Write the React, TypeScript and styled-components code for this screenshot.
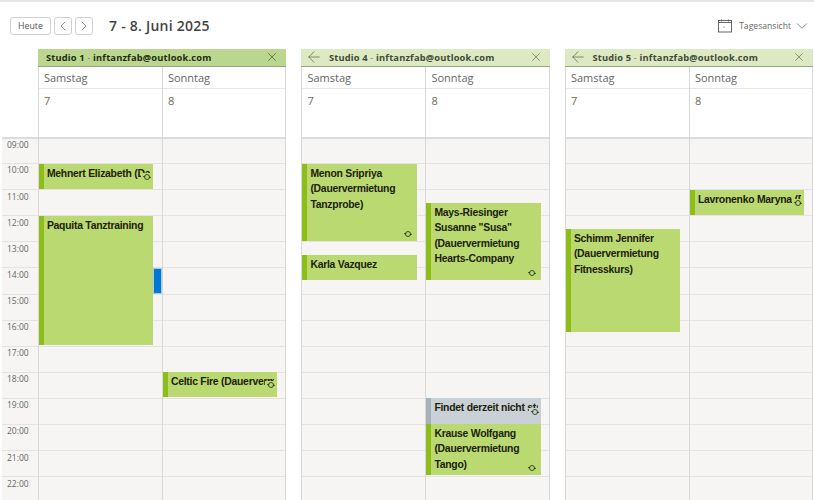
import styled, { createGlobalStyle } from "styled-components";
import { ArrowLeft, ChevronDown, ChevronLeft, ChevronRight, X } from "lucide-react";

const HOUR = 26.1;
const FIRST_HOUR = 9;
const HOURS = Array.from({ length: 14 }, (_, i) => FIRST_HOUR + i);

const GlobalStyle = createGlobalStyle`
  html, body {
    margin: 0;
    padding: 0;
    height: 500px;
    overflow: hidden;
    background: #fff;
    font-family: "Open Sans", "Noto Sans", sans-serif;
  }
  * { box-sizing: border-box; }
`;

const Page = styled.div`
  width: 814px;
  height: 500px;
  overflow: hidden;
  border-top: 2px solid #e6e6e6;
`;

const Toolbar = styled.div`
  display: flex;
  align-items: center;
  height: 46.5px;
  padding: 1px 3.5px 0 10px;
`;

const ToolButton = styled.button<{ $wide?: boolean }>`
  display: flex;
  align-items: center;
  justify-content: center;
  width: ${(p) => (p.$wide ? "41px" : "18px")};
  height: 18px;
  margin-right: 3px;
  padding: 0;
  border: 1px solid #d0d0d0;
  border-radius: 3px;
  background: #fff;
  color: #555;
  font-family: inherit;
  font-size: 8.8px;
`;

const RangeTitle = styled.h1`
  margin: 0 0 0 13px;
  color: #444;
  font-size: 14px;
  font-weight: 600;
  letter-spacing: 0.25px;
`;

const ViewSwitch = styled.div`
  display: flex;
  align-items: center;
  margin-left: auto;
  color: #666;
  font-size: 8.6px;
`;

const ViewLabel = styled.span`
  margin: 0 1.5px 0 7px;
`;

const Board = styled.div`
  display: flex;
  padding-left: 2px;
`;

const TimeColumn = styled.div`
  width: 35.9px;
  flex-shrink: 0;
  padding-top: 88.5px;
`;

const TimeCell = styled.div`
  height: ${HOUR}px;
  padding: 0.4px 0 0 5px;
  background: #f6f5f4;
  border-top: 1px solid #e4e3e2;
  color: #666;
  font-size: 8.5px;
  line-height: 11px;

  &:first-child {
    border-top: 2px solid #dcdcdc;
  }
`;

const Panels = styled.div`
  display: flex;
  gap: 15px;
`;

const Panel = styled.section`
  width: 248.5px;
  flex-shrink: 0;
`;

const PanelHeader = styled.header<{ $active?: boolean }>`
  display: flex;
  align-items: center;
  height: 18px;
  padding: 0 7px 0 ${(p) => (p.$active ? "8px" : "4px")};
  background: ${(p) => (p.$active ? "#bbd78f" : "#dce9c3")};
  border-bottom: 1px solid #98a585;
  color: ${(p) => (p.$active ? "#1f2a12" : "#3f4a38")};
  font-size: 9.3px;
  font-weight: 700;
  letter-spacing: 0.17px;
`;

const PanelName = styled.span<{ $active?: boolean }>`
  margin-left: ${(p) => (p.$active ? "0" : "5.5px")};
  flex: 1;
  white-space: nowrap;
`;

const Dash = styled.span`
  font-weight: 400;
  color: #777;
`;

const Days = styled.div`
  display: grid;
  grid-template-columns: 124px 1fr;
  border-right: 1px solid #d8d8d8;
`;

const Day = styled.div`
  border-left: 1px solid #d8d8d8;
`;

const DayName = styled.div`
  height: 22px;
  padding: 3px 0 0 5px;
  border-bottom: 1px solid #e6e6e6;
  color: #666;
  font-size: 11px;
  line-height: 15px;
`;

const DayNumber = styled.div`
  height: 48.5px;
  padding: 4px 0 0 5px;
  color: #6b6b5c;
  font-size: 11px;
  line-height: 15px;
`;

const Grid = styled.div`
  position: relative;
`;

const HourCell = styled.div`
  height: ${HOUR}px;
  background: #f6f5f4;
  border-top: 1px solid #e4e3e2;

  &:first-child {
    border-top: 2px solid #dcdcdc;
  }
`;

const Event = styled.div<{ $muted?: boolean }>`
  position: absolute;
  left: 0;
  width: 114.5px;
  padding: 1.5px 3px 0 3px;
  background: ${(p) => (p.$muted ? "#c9d1d6" : "#bbd971")};
  border-left: 5px solid ${(p) => (p.$muted ? "#a3b2bd" : "#8cbd18")};
  color: #1c210c;
  font-family: "Liberation Sans", Arial, sans-serif;
  font-size: 10.4px;
  font-weight: 700;
  letter-spacing: -0.25px;
  line-height: 15.5px;
`;

const EventTitle = styled.div<{ $single?: boolean }>`
  overflow: hidden;
  white-space: ${(p) => (p.$single ? "nowrap" : "normal")};
`;

// the icon sits on a patch of the event colour and hides the lower part of the text
const IconPatch = styled.span<{ $single?: boolean }>`
  position: absolute;
  right: ${(p) => (p.$single ? "0" : "2px")};
  bottom: ${(p) => (p.$single ? "7.5px" : "3px")};
  display: flex;
  align-items: center;
  justify-content: center;
  width: ${(p) => (p.$single ? "12px" : "13px")};
  height: 9px;
  background: inherit;
`;

const Marker = styled.div`
  position: absolute;
  left: 114px;
  width: 9px;
  height: 26px;
  background: #0078d4;
  border: 1px solid #a9c9e8;
`;

const SyncIcon = () => (
  <svg width="10" height="8" viewBox="0 0 10 8" fill="none" stroke="#333d1c" strokeWidth="0.9">
    <circle cx="5" cy="4" r="2.5" />
    <path d="M1 3.6h2.2M6.8 4.4H9" />
  </svg>
);

const CalendarIcon = () => (
  <svg width="14" height="14" viewBox="0 0 14 14" fill="none" stroke="#555" strokeWidth="0.9">
    <rect x="0.5" y="1.5" width="13" height="11.5" />
    <path d="M0.5 3.5h13M3.5 0.5v2M10.5 0.5v2" />
    <rect x="5.6" y="7.6" width="1" height="1" fill="#555" stroke="none" />
  </svg>
);

type CalendarEvent = {
  title: string;
  top: number;
  height: number;
  muted?: boolean;
  repeat?: boolean;
  single?: boolean;
};

type Studio = {
  name: string;
  active?: boolean;
  saturday: CalendarEvent[];
  sunday: CalendarEvent[];
  marker?: number;
};

const STUDIOS: Studio[] = [
  {
    name: "Studio 1",
    active: true,
    marker: 131,
    saturday: [
      { title: "Mehnert Elizabeth (Dauervermietung", top: 27, height: 25, repeat: true, single: true },
      { title: "Paquita Tanztraining", top: 79, height: 129, single: true },
    ],
    sunday: [
      { title: "Celtic Fire (Dauervermietung", top: 235, height: 25, repeat: true, single: true },
    ],
  },
  {
    name: "Studio 4",
    saturday: [
      { title: "Menon Sripriya (Dauervermietung Tanzprobe)", top: 27, height: 77, repeat: true },
      { title: "Karla Vazquez", top: 118, height: 25, single: true },
    ],
    sunday: [
      { title: 'Mays-Riesinger Susanne "Susa" (Dauervermietung Hearts-Company', top: 66, height: 77, repeat: true },
      { title: "Findet derzeit nicht statt", top: 261, height: 26, muted: true, repeat: true, single: true },
      { title: "Krause Wolfgang (Dauervermietung Tango)", top: 287, height: 51, repeat: true },
    ],
  },
  {
    name: "Studio 5",
    saturday: [
      { title: "Schimm Jennifer (Dauervermietung Fitnesskurs)", top: 92, height: 103 },
    ],
    sunday: [
      { title: "Lavronenko Maryna (Dauervermietung", top: 53, height: 25, repeat: true, single: true },
    ],
  },
];

const DayColumn = ({ name, date, events, marker }: { name: string; date: number; events: CalendarEvent[]; marker?: number }) => (
  <Day>
    <DayName>{name}</DayName>
    <DayNumber>{date}</DayNumber>
    <Grid>
      {HOURS.map((h) => (
        <HourCell key={h} />
      ))}
      {events.map((ev) => (
        <Event key={ev.title} $muted={ev.muted} style={{ top: ev.top, height: ev.height }}>
          <EventTitle $single={ev.single}>{ev.title}</EventTitle>
          {ev.repeat && (
            <IconPatch $single={ev.single}>
              <SyncIcon />
            </IconPatch>
          )}
        </Event>
      ))}
      {marker !== undefined && <Marker style={{ top: marker }} />}
    </Grid>
  </Day>
);

const App = () => {
  return (
    <Page>
      <GlobalStyle />
      <Toolbar>
        <ToolButton $wide>Heute</ToolButton>
        <ToolButton>
          <ChevronLeft size={18} strokeWidth={1} />
        </ToolButton>
        <ToolButton>
          <ChevronRight size={18} strokeWidth={1} />
        </ToolButton>
        <RangeTitle>7 - 8. Juni 2025</RangeTitle>
        <ViewSwitch>
          <CalendarIcon />
          <ViewLabel>Tagesansicht</ViewLabel>
          <ChevronDown size={18} strokeWidth={1} />
        </ViewSwitch>
      </Toolbar>
      <Board>
        <TimeColumn>
          {HOURS.map((h) => (
            <TimeCell key={h}>{String(h).padStart(2, "0")}:00</TimeCell>
          ))}
        </TimeColumn>
        <Panels>
          {STUDIOS.map((s) => (
            <Panel key={s.name}>
              <PanelHeader $active={s.active}>
                {!s.active && <ArrowLeft size={18} strokeWidth={0.8} />}
                <PanelName $active={s.active}>
                  {s.name} <Dash>-</Dash> inftanzfab@outlook.com
                </PanelName>
                <X size={14} strokeWidth={0.9} />
              </PanelHeader>
              <Days>
                <DayColumn name="Samstag" date={7} events={s.saturday} marker={s.marker} />
                <DayColumn name="Sonntag" date={8} events={s.sunday} />
              </Days>
            </Panel>
          ))}
        </Panels>
      </Board>
    </Page>
  );
};

export default App;
